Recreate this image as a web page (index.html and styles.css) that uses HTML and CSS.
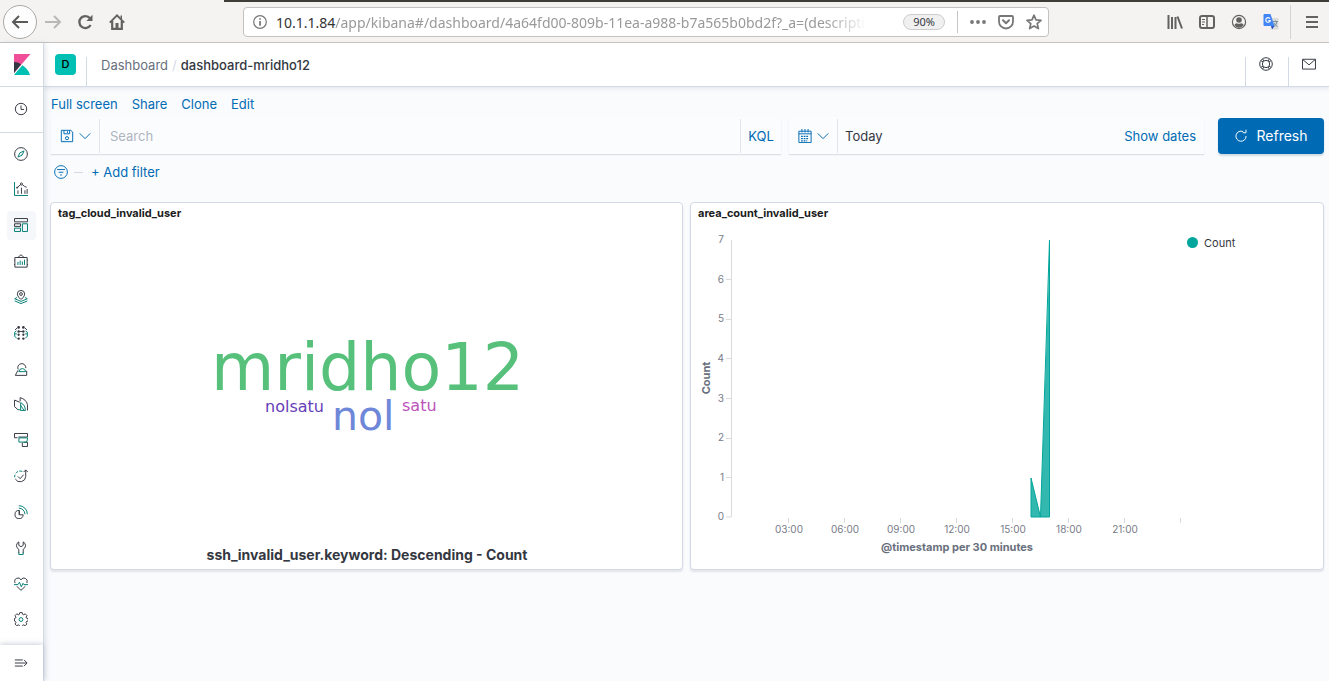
FILE: index.html
```html
<!DOCTYPE html>
<html lang="en">
<head>
<meta charset="utf-8">
<title>dashboard-mridho12 - Kibana</title>
<link rel="stylesheet" href="styles.css">
</head>
<body>
<div class="browser">
  <div class="tabstrip"></div>
  <div class="toolbar">
    <button class="tb-btn back" aria-label="Back"><svg width="18" height="18" viewBox="0 0 18 18"><path d="M17 9H2M8 3L2 9l6 6" fill="none" stroke="#5b5a59" stroke-width="2"/></svg></button>
    <button class="tb-btn forward" aria-label="Forward"><svg width="18" height="18" viewBox="0 0 18 18"><path d="M1 9h15M10 3l6 6-6 6" fill="none" stroke="#b9b8b6" stroke-width="2"/></svg></button>
    <button class="tb-btn reload" aria-label="Reload"><svg width="16" height="16" viewBox="0 0 16 16"><path d="M13 4.2A6 6 0 1 0 13.6 11" fill="none" stroke="#63625f" stroke-width="2.3"/><path d="M15.5.8V7H9.3z" fill="#63625f"/></svg></button>
    <button class="tb-btn home" aria-label="Home"><svg width="16" height="16" viewBox="0 0 16 16"><path d="M.8 8.6L8 1.4l7.200 7.200" fill="none" stroke="#63625f" stroke-width="2"/><path d="M3.200 7v7.800h9.600V7" fill="none" stroke="#63625f" stroke-width="2.200"/><path d="M6.500 9h3v6h-3z" fill="#63625f"/><path d="M11.500 1.500H13V5h-1.500z" fill="#63625f"/></svg></button>
    <div class="urlbar">
      <svg width="14" height="14" viewBox="0 0 14 14"><circle cx="7" cy="7" r="6.300" fill="none" stroke="#777" stroke-width="1.200"/><path d="M6.200 6h1.700v4.700H6.200zM6.200 3.200h1.700v1.600H6.200z" fill="#777"/></svg>
      <label class="host" for="url">10.1.1.84</label>
      <input class="url" id="url" type="text" value="/app/kibana#/dashboard/4a64fd00-809b-11ea-a988-b7a565b0bd2f?_a=(description">
      <button class="zoom">90%</button>
      <span class="urlsep"></span>
      <button class="tb-btn" aria-label="Page actions"><svg width="16" height="16" viewBox="0 0 16 16" fill="#777"><circle cx="2" cy="8" r="1.900"/><circle cx="8" cy="8" r="1.900"/><circle cx="14" cy="8" r="1.900"/></svg></button>
      <button class="tb-btn" aria-label="Save to Pocket"><svg width="16" height="16" viewBox="0 0 16 16" fill="none" stroke="#777" stroke-width="2" stroke-linecap="round" stroke-linejoin="round"><path d="M2 2h12q1 0 1 1v4.500a7 7 0 0 1-14 0V3q0-1 1-1z" stroke-width="1.800"/><path d="M5 6.300l3 3 3-3"/></svg></button>
      <button class="tb-btn" aria-label="Bookmark"><svg width="16" height="16" viewBox="0 0 16 16" fill="none" stroke="#777" stroke-width="1.700" stroke-linejoin="round"><path d="M8 1.200l2 4.600 5 .5-3.800 3.300 1.200 5L8 12l-4.400 2.600 1.200-5L1 6.300l5-.5z"/></svg></button>
    </div>
    <div class="tools">
      <button class="tb-btn" aria-label="Library"><svg width="16" height="16" viewBox="0 0 16 16" fill="none" stroke="#63625f" stroke-width="2"><path d="M1.500 1v14M5 3v12M8.500 3v12M10.500 2.500l4.500 12"/></svg></button>
      <button class="tb-btn" aria-label="Sidebars"><svg width="16" height="16" viewBox="0 0 16 16" fill="none" stroke="#63625f"><rect x="1" y="2" width="14" height="12" rx="2" stroke-width="2"/><path d="M8 2v12" stroke-width="1.500"/><path d="M3 5.500h3M3 8h3M3 10.500h2"/></svg></button>
      <button class="tb-btn" aria-label="Account"><svg width="16" height="16" viewBox="0 0 16 16"><circle cx="8" cy="8" r="6.600" fill="none" stroke="#63625f" stroke-width="1.200"/><circle cx="8" cy="6" r="2.800" fill="#63625f"/><path d="M3.300 11q1-2 3-1.600 1.700.8 3.400 0 2-.4 3 1.600a5.500 5.500 0 0 1-9.400 0z" fill="#63625f"/></svg></button>
      <button class="tb-btn" aria-label="Translate"><svg width="16" height="16" viewBox="0 0 16 16"><path d="M6 4h9.500v11.500H9z" fill="#dcdcdc"/><path d="M10 7.500h5M12.500 6.500v1M14 7.500q-.5 3-3 5M11 9q1 2.500 3.500 3.500" stroke="#78909c" fill="none"/><path d="M1 0h6.500l4 12H1.500Q.5 12 .5 11V1z" fill="#4285f4"/><path d="M8 12h3.500L9 15.500z" fill="#2852c8"/><path d="M7 4.700A2.300 2.300 0 1 0 7.300 6.500H5.300" fill="none" stroke="#fff" stroke-width="1.100"/></svg></button>
      <span class="toolsep"></span>
      <button class="tb-btn" aria-label="Menu"><svg width="14" height="14" viewBox="0 0 14 14" fill="none" stroke="#63625f" stroke-width="2"><path d="M1 2h12M1 7h12M1 12h12"/></svg></button>
    </div>
  </div>
</div>

<div class="app">
  <aside class="side">
    <a class="logo" href="#" aria-label="Kibana"><svg width="18" height="22" viewBox="0 0 18 22"><path d="M1 0h16.500L1 19z" fill="#f04e98"/><path d="M1 8q4 0 7.200 2.200L1 19z" fill="#343741"/><path d="M9.300 11.300q6 3.500 7.700 9.700H1z" fill="#00bfb3"/></svg></a>
    <a class="nav recent" href="#" aria-label="Recently viewed"><svg class="ic" viewBox="0 0 16 16"><circle cx="8" cy="8" r="6.500"/><path d="M8 4v4.500h3.500"/></svg></a>
    <nav class="navlist">
      <a class="nav" href="#" aria-label="Discover"><svg class="ic" viewBox="0 0 16 16"><circle cx="8" cy="8" r="7.300"/><path class="t" d="M11.500 4.500L9.300 9.300 4.500 11.500 6.700 6.700zM8 8l.4.400"/></svg></a>
      <a class="nav" href="#" aria-label="Visualize"><svg class="ic" viewBox="0 0 16 16"><path class="t" d="M.6 0v15.400H16"/><path d="M4.500 13.500v-4M8.500 13.500v-7M12.500 13.500v-4M15 13.500V8M3.500 6.500l4-3.500M9.500 3l2.500 2 2.500 1"/><circle cx="8.500" cy="2.300" r="1.200"/><circle cx="3.500" cy="6.500" r=".7"/></svg></a>
      <a class="nav active" href="#" aria-label="Dashboard"><svg class="ic" viewBox="0 0 16 16"><path d="M.6.600h14.800v3.800H.6z"/><path d="M.6 6.600h6.800v3H.6z"/><path class="t" d="M.6 11.600h6.800v3.800H.6zM9.600 6.600h5.800v8.800H9.600z"/></svg></a>
      <a class="nav" href="#" aria-label="Canvas"><svg class="ic" viewBox="0 0 16 16"><path d="M1 4h14v11H1zM4.500 4L8 .8 11.500 4M0 7h1M0 12h1M15 7h1M15 12h1"/><path class="t" d="M4.500 12.500V9M7 12.500v-5M9.500 12.500v-4M12 12.500v-6"/></svg></a>
      <a class="nav" href="#" aria-label="Maps"><svg class="ic" viewBox="0 0 16 16"><path d="M8 11S3.800 7.500 3.800 4.700a4.200 4.200 0 0 1 8.400 0C12.200 7.500 8 11 8 11z"/><circle cx="8" cy="4.600" r="1.600"/><path class="t" d="M3.500 8.500L.8 10 8 13l7.200-3-2.700-1.500M.8 12.500L8 15.500l7.200-3"/></svg></a>
      <a class="nav" href="#" aria-label="Machine Learning"><svg class="ic" viewBox="0 0 16 16"><g class="d"><circle cx="5.300" cy="1.600" r="1.500"/><circle cx="10.700" cy="1.600" r="1.500"/><circle cx="5.300" cy="6.300" r="1.400"/><circle cx="10.700" cy="6.300" r="1.400"/><circle cx="5.300" cy="10" r="1.300"/><circle cx="10.700" cy="10" r="1.300"/><circle cx="5.300" cy="14.400" r="1.400"/><circle cx="10.700" cy="14.400" r="1.400"/></g><path d="M1.200 4.500L3.500 2.300M14.800 4.500l-2.300-2.200M6.500 6.300h3"/><path class="t" d="M2.800 5.500L.8 7v5l2.200 1.700M13.200 5.500l2 1.500v5L13 13.700M.8 9h2.500M15.200 9h-2.500"/></svg></a>
      <a class="nav" href="#" aria-label="Infrastructure"><svg class="ic" viewBox="0 0 16 16"><path d="M4.800 8.500A4.600 4.600 0 1 1 13.500 7M4.500 9.500L1.500 15.300h13V10"/><path class="t" d="M5.500 11q.8-3.500 4-3.500t4 3.500z"/></svg></a>
      <a class="nav" href="#" aria-label="Logs"><svg class="ic" viewBox="0 0 16 16"><path d="M4.500 14.500L.6 11V3.500l6 2.500M7 5V.7q7 2 8.400 8v6.700"/><path class="t" d="M7.600 6.500v9H13q0-6.500-5.400-9zM7.600 9.500l4 6M4.500 14.500h3"/></svg></a>
      <a class="nav" href="#" aria-label="APM"><svg class="ic" viewBox="0 0 16 16"><path d="M4 5.400H.6V.6h14.800v4H5M9.500 11v4.400h5.900v-4.800H11"/><path class="t" d="M5.600 5.600h9.800v1.500l-1 3.300H5.600z"/></svg></a>
      <a class="nav" href="#" aria-label="Uptime"><svg class="ic" viewBox="0 0 16 16"><path d="M1.500 11.500a6.400 6.400 0 0 0 11.900-3V1.500M11 3.500l2.400-2.500 2.400 2.500M4.500 8.500l2.500 2.500 4-4.500"/><path class="t" d="M.8 9.500q-.2-1.500.4-3M2 4.800Q3 3.500 4.500 2.800M6 2.400q2-.3 3.500.4"/></svg></a>
      <a class="nav" href="#" aria-label="SIEM"><svg class="ic" viewBox="0 0 16 16"><path d="M6 6.200a4.700 4.700 0 1 0 4.500 5H6zM6 11v-4.800"/><path class="t" d="M5.500.8A9.700 9.700 0 0 1 15.300 10.500M5.500 3.600a7 7 0 0 1 7 6.900"/></svg></a>
      <a class="nav" href="#" aria-label="Dev Tools"><svg class="ic" viewBox="0 0 16 16"><path d="M5.500 14V9.500Q2.800 8 2.800 5.200T5.500 1v4l2.500 1.500L10.500 5V1q2.700 1.400 2.700 4.200T10.500 9.500V14"/><path class="t" d="M5.500 13v2.400h5V13"/></svg></a>
      <a class="nav" href="#" aria-label="Stack Monitoring"><svg class="ic" viewBox="0 0 16 16"><path d="M1.200 7Q-.3 3 3 1.500T8 3.200q2-3.200 5-1.700T14.800 7M3 10.500l5 4.700 5-4.700"/><path class="t" d="M0 8.700h4.500L6.300 6l2 5.200 2-4 1 1.500H16"/></svg></a>
      <a class="nav" href="#" aria-label="Management"><svg class="ic" viewBox="0 0 16 16"><path d="M6.600.7h2.800l.5 1.900 1.200.5 1.700-1 2 2-1 1.700.5 1.200 1.900.5v2.800l-1.900.5-.5 1.200 1 1.700-2 2-1.700-1-1.200.5-.5 1.900H6.600l-.5-1.900-1.200-.5-1.700 1-2-2 1-1.700-.5-1.200-1.200-.5V7.500l1.200-.5.5-1.200-1-1.700 2-2 1.700 1 1.200-.5z"/><circle class="t" cx="8" cy="8.600" r="2.200"/></svg></a>
    </nav>
    <button class="expand" aria-label="Expand"><svg class="ic" viewBox="0 0 16 16"><path d="M1 4.500h9M1 8h13.500M1 11.500h9M11.500 4.500L15 8l-3.500 3.500"/></svg></button>
  </aside>

  <div class="main">
    <header class="head">
      <button class="space"><span class="badge">D</span></button>
      <div class="crumbs"><a href="#">Dashboard</a><span class="slash">/</span><strong>dashboard-mridho12</strong></div>
      <button class="headbtn" aria-label="Help"><svg class="ic" viewBox="0 0 16 16"><circle cx="8" cy="8" r="7.200"/><circle cx="8" cy="8" r="4.200"/><path d="M2.300 4.300l2.300 1.300M4.300 2.300l1.300 2.300M11.700 2.300l-1.300 2.300M13.700 4.300l-2.300 1.300M13.700 11.700l-2.300-1.300M11.700 13.700l-1.300-2.300M4.300 13.700l1.300-2.300M2.300 11.700l2.300-1.300"/></svg></button>
      <button class="headbtn" aria-label="News"><svg class="ic" viewBox="0 0 16 16"><path d="M.6 2.600h14.800v11.200H.6zM1 3l7 6 7-6"/></svg></button>
    </header>

    <main class="content">
      <nav class="menu"><a href="#">Full screen</a><a href="#">Share</a><a href="#">Clone</a><a href="#">Edit</a></nav>
      <div class="query">
        <div class="box search">
          <button class="pick" aria-label="Saved queries"><svg class="ic b" viewBox="0 0 16 16"><path d="M1.500 1.500h10.700l2.300 2v11h-13zM4.500 1.500v4h6.500v-4M8.500 2.500v2M4.500 14.500v-1"/><circle cx="8" cy="10.500" r="1.800"/></svg><svg class="ic b" viewBox="0 0 16 16"><path d="M2 5l6 6 6-6"/></svg></button>
          <input class="qinput" type="text" placeholder="Search" aria-label="Search">
          <button class="kql">KQL</button>
        </div>
        <div class="box dates">
          <button class="pick" aria-label="Date quick select"><svg class="ic b" viewBox="0 0 16 16"><path d="M1 2.500h14v13H1zM1 5.500h14M4.500 0v4M8 0v4M11.500 0v4"/><path d="M3.500 8.500h9M3.500 11h9M3.500 13.500h7" stroke-dasharray="2 1" stroke-width="1.400"/></svg><svg class="ic b" viewBox="0 0 16 16"><path d="M2 5l6 6 6-6"/></svg></button>
          <button class="today">Today</button>
          <button class="show">Show dates</button>
        </div>
        <button class="refresh"><svg class="ic w" viewBox="0 0 16 16"><path d="M10.500 3A5.800 5.800 0 1 0 13.800 8M10 4.300h3.700V.8"/></svg>Refresh</button>
      </div>
      <div class="filters">
        <button class="tb-btn" aria-label="Filter options"><svg class="ic b" viewBox="0 0 16 16"><circle cx="8" cy="8" r="7.300"/><path d="M3.500 5.200h9M5.300 8.300h5.400M7 11.400h2"/></svg></button>
        <span class="dash"></span>
        <button class="add">+ Add filter</button>
      </div>

      <div class="panels">
        <section class="panel">
          <h2>tag_cloud_invalid_user</h2>
          <svg class="cloud" viewBox="0 0 631 346">
            <g class="word">
              <text x="160" y="167" font-size="65" fill="#57c17b">mridho12</text>
              <text x="281" y="207" font-size="41" fill="#6f87d8">nol</text>
              <text x="214" y="189" font-size="16" fill="#663db8">nolsatu</text>
              <text x="351" y="188" font-size="16" fill="#bc52bc">satu</text>
            </g>
            <text class="cloudlabel" x="316" y="337">ssh_invalid_user.keyword: Descending - Count</text>
          </svg>
        </section>
        <section class="panel">
          <h2>area_count_invalid_user</h2>
          <div class="chartrow">
            <svg class="chart" viewBox="0 0 494 346">
              <path class="axis" d="M40.500 17v277M35 56.500h5M35 96.500h5M35 135.500h5M35 175.500h5M35 215.500h5M35 254.500h5M35 294h5M97.500 295v5M153.500 295v5M209.500 295v5M265.500 295v5M321.500 295v5M377.500 295v5M433.500 295v5M489.500 295v5"/>
              <path d="M340 294V255l9.500 39L359 17v277z" fill="#00a69b" fill-opacity=".8"/>
              <path d="M340 294V255l9.500 39L358.500 17v277z" fill="none" stroke="#00a69b"/>
              <g class="yl"><text x="33" y="20">7</text><text x="33" y="60">6</text><text x="33" y="99">5</text><text x="33" y="139">4</text><text x="33" y="179">3</text><text x="33" y="218">2</text><text x="33" y="258">1</text><text x="33" y="297">0</text></g>
              <g class="xl"><text x="98" y="310">03:00</text><text x="154" y="310">06:00</text><text x="210" y="310">09:00</text><text x="266" y="310">12:00</text><text x="322" y="310">15:00</text><text x="378" y="310">18:00</text><text x="434" y="310">21:00</text></g>
              <text class="at" x="266" y="328">@timestamp per 30 minutes</text>
              <text class="at" transform="translate(19 155) rotate(-90)">Count</text>
            </svg>
            <div class="legend"><i class="dot"></i>Count</div>
          </div>
        </section>
      </div>
    </main>
  </div>
</div>
</body>
</html>
```
FILE: styles.css
```css
* { box-sizing: border-box; }
body {
  margin: 0;
  min-height: 100vh;
  display: flex;
  flex-direction: column;
  font-family: Inter, "Liberation Sans", sans-serif;
  font-size: 13px;
  color: #343741;
  background: #fafbfd;
}
button, input { font: inherit; color: inherit; background: none; border: 0; padding: 0; margin: 0; outline: 0; }
a { color: #006bb4; text-decoration: none; }
svg { display: block; flex: none; }

/* browser chrome */
.browser { background: #f4f3f1; border-bottom: 1px solid #c6c5c3; }
.tabstrip { height: 2px; margin-left: 224px; background: #3f3d37; }
.toolbar { display: flex; align-items: center; height: 40px; padding: 0 10px 0 3px; }
.tb-btn { display: flex; align-items: center; justify-content: center; }
.back { width: 34px; height: 34px; border: 1px solid #aaa9a7; border-radius: 50%; background: #fdfdfd; }
.forward { margin-left: 7px; }
.reload { margin-left: 15px; }
.home { margin-left: 16px; }
.urlbar {
  flex: 1;
  min-width: 0;
  display: flex;
  align-items: center;
  height: 30px;
  margin: 0 118px;
  padding: 0 6px 0 9px;
  border: 1px solid #c3c2c0;
  border-radius: 4px;
  background: #fff;
  font-family: "Noto Sans", sans-serif;
  font-size: 14px;
}
.host { margin-left: 9px; color: #333; }
.url {
  flex: 1;
  min-width: 0;
  color: #999;
  -webkit-mask-image: linear-gradient(to right, #000 92%, transparent);
  mask-image: linear-gradient(to right, #000 92%, transparent);
}
.zoom {
  width: 42px;
  height: 16px;
  margin-left: 36px;
  border: 1px solid #ccc;
  border-radius: 8px;
  background: #f0f0f0;
  font-size: 11px;
  line-height: 14px;
}
.urlsep { width: 1px; height: 22px; margin-left: 12px; background: #c6c5c3; }
.urlbar .tb-btn { margin-left: 12px; }
.tools { display: flex; align-items: center; gap: 16px; }
.toolsep { width: 1px; height: 34px; margin: 0 -2px 0 -5px; background: #d5d4d2; }

/* application frame */
.app { flex: 1; display: flex; }
.side {
  position: relative;
  display: flex;
  flex-direction: column;
  width: 44px;
  background: #fff;
  border-right: 1px solid #d3dae6;
  box-shadow: 2px 0 5px rgba(152, 162, 179, .25);
}
.logo { display: flex; align-items: center; height: 44px; padding-left: 13px; border-bottom: 1px solid #d3dae6; background: #fff; }
.ic { width: 14px; height: 14px; fill: none; stroke: #343741; stroke-width: 1.1; }
.ic .t { stroke: #017d73; }
.ic .d { fill: #343741; stroke: none; }
.ic.b { stroke: #006bb4; }
.ic.w { stroke: #fff; }
.nav { display: flex; align-items: center; justify-content: center; width: 29px; height: 29px; margin: 0 7px; padding-right: 1px; border-radius: 4px; }
.recent { width: auto; height: 46px; margin: 0; padding: 0 2px 1px 0; border-bottom: 1px solid #d3dae6; border-radius: 0; }
.active { background: #f5f7fa; }
.navlist { flex: 1; display: flex; flex-direction: column; justify-content: space-between; padding: 6px 0 11px; }
.expand { display: flex; align-items: center; justify-content: center; height: 36px; padding-right: 1px; box-shadow: 0 -1px 5px rgba(152, 162, 179, .5); }

.main { flex: 1; min-width: 0; display: flex; flex-direction: column; }
.head { display: flex; align-items: flex-end; height: 44px; background: #fff; border-bottom: 1px solid #d3dae6; box-shadow: 0 2px 4px rgba(152, 162, 179, .2); }
.space { display: flex; width: 43px; height: 29px; padding-left: 11px; border-right: 1px solid #d3dae6; align-items: flex-start; }
.badge { width: 21px; height: 21px; margin-top: -3px; border-radius: 4px; background: #00bfb3; color: #000; font-size: 11px; font-weight: 500; line-height: 21px; text-align: center; }
.crumbs { flex: 1; display: flex; gap: 4px; height: 29px; padding-left: 14px; line-height: 16px; }
.crumbs a { color: #69707d; }
.crumbs strong { font-weight: 500; }
.slash { color: #d3dae6; }
.headbtn { display: flex; justify-content: center; width: 43px; height: 29px; padding-right: 2px; border-left: 1px solid #d3dae6; }
.headbtn + .headbtn { width: 41px; padding-right: 0; }

.content { flex: 1; padding: 8px 5px 0 6px; }
.menu { display: flex; gap: 14px; padding-left: 1px; line-height: 18px; }
.query { display: flex; align-items: flex-start; margin: 5px 0 0 1px; line-height: 18px; }
.box { display: flex; align-items: center; height: 36px; background: #fbfcfd; box-shadow: 0 1px 1px rgba(152, 162, 179, .3); }
.search { flex: 1; min-width: 0; }
.dates { width: 415px; margin: 0 14px 0 8px; }
.pick { display: flex; align-items: center; justify-content: flex-end; gap: 4px; width: 49px; height: 34px; padding-right: 7px; border-right: 1px solid #e0e4eb; }
.qinput { flex: 1; min-width: 0; height: 34px; padding-left: 10px; }
.qinput::placeholder { color: #aeb4bf; opacity: 1; }
.kql { width: 41px; height: 34px; border-left: 1px solid #e0e4eb; color: #006bb4; }
.today { flex: 1; padding-left: 7px; text-align: left; }
.show { padding-right: 8px; color: #006bb4; }
.refresh { display: flex; align-items: center; justify-content: center; gap: 8px; width: 106px; height: 36px; border-radius: 4px; background: #006bb4; color: #fff; font-size: 14px; box-shadow: 0 2px 2px rgba(54, 97, 126, .2); }
.filters { display: flex; align-items: center; height: 36px; padding-left: 4px; }
.dash { width: 9px; height: 1px; margin: 0 8px 0 6px; background: #d3dae6; }
.add { color: #006bb4; }

.panels { display: grid; grid-template-columns: 633fr 634fr; gap: 7px; margin-top: 12px; }
.panel { min-width: 0; border: 1px solid #d3dae6; border-radius: 4px; background: #fff; box-shadow: 0 2px 2px rgba(152, 162, 179, .25); }
.panel h2 { margin: 0; padding-left: 7px; color: #1a1c21; font-size: 11px; font-weight: 700; line-height: 20px; }
.cloud { width: 100%; }
.word { font-family: "DejaVu Sans", sans-serif; }
.cloudlabel { font-size: 14px; font-weight: 700; text-anchor: middle; fill: #343741; }
.chartrow { display: flex; }
.chart { flex: 1; min-width: 0; }
.axis { fill: none; stroke: #d8dade; }
.yl, .xl { font-size: 10px; fill: #777c88; }
.yl { text-anchor: end; }
.xl { text-anchor: middle; }
.at { font-size: 11px; font-weight: 700; fill: #69707d; text-anchor: middle; }
.legend { display: flex; align-items: center; gap: 6px; width: 138px; height: 15px; margin-top: 12px; padding-left: 2px; font-size: 11px; }
.dot { width: 11px; height: 11px; border-radius: 50%; background: #00a69b; }
```
